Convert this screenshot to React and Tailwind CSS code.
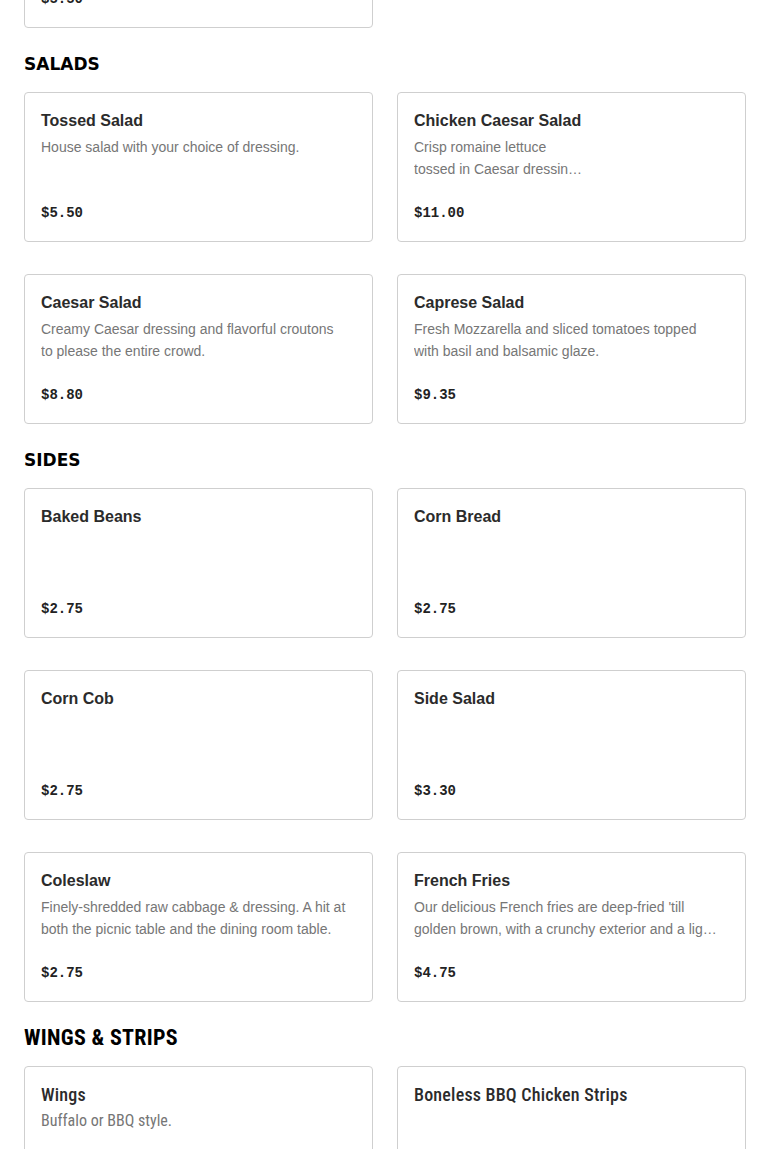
import React from 'react';

const SECTIONS = [
  {
    title: 'SALADS',
    items: [
      { name: 'Tossed Salad', desc: ['House salad with your choice of dressing.'], price: '$5.50' },
      { name: 'Chicken Caesar Salad', desc: ['Crisp romaine lettuce', 'tossed in Caesar dressin…'], price: '$11.00' },
      { name: 'Caesar Salad', desc: ['Creamy Caesar dressing and flavorful croutons', 'to please the entire crowd.'], price: '$8.80' },
      { name: 'Caprese Salad', desc: ['Fresh Mozzarella and sliced tomatoes topped', 'with basil and balsamic glaze.'], price: '$9.35' },
    ],
  },
  {
    title: 'SIDES',
    items: [
      { name: 'Baked Beans', desc: [], price: '$2.75' },
      { name: 'Corn Bread', desc: [], price: '$2.75' },
      { name: 'Corn Cob', desc: [], price: '$2.75' },
      { name: 'Side Salad', desc: [], price: '$3.30' },
      { name: 'Coleslaw', desc: ['Finely-shredded raw cabbage & dressing. A hit at', 'both the picnic table and the dining room table.'], price: '$2.75' },
      { name: 'French Fries', desc: ["Our delicious French fries are deep-fried 'till", 'golden brown, with a crunchy exterior and a lig…'], price: '$4.75' },
    ],
  },
  {
    title: 'WINGS & STRIPS',
    narrow: true,
    items: [
      { name: 'Wings', desc: ['Buffalo or BBQ style.'], price: '' },
      { name: 'Boneless BBQ Chicken Strips', desc: [], price: '' },
    ],
  },
];

function Card({ item, narrow }) {
  return (
    <div className="h-[150px] flex flex-col border border-[#cfcfcf] rounded-[4px] bg-white p-4">
      {narrow ? (
        <p className="font-['Roboto_Condensed','DejaVu_Sans_Condensed',sans-serif] text-[18px] leading-6 font-medium tracking-[0.2px] text-[#2b2b2b]">{item.name}</p>
      ) : (
        <p className="text-[16px] leading-6 font-bold text-[#2b2b2b]">{item.name}</p>
      )}
      <div
        className={
          narrow
            ? "mt-[3px] font-['Roboto_Condensed','DejaVu_Sans_Condensed',sans-serif] text-[16px] leading-[22px] text-[#767676]"
            : 'mt-[3px] text-[14px] leading-[22px] text-[#767676]'
        }
      >
        {item.desc.map((line, i) => (
          <p key={i} className="whitespace-nowrap overflow-hidden">{line}</p>
        ))}
      </div>
      <p className="mt-auto font-['Liberation_Mono',monospace] text-[14px] leading-6 font-bold text-[#222]">{item.price}</p>
    </div>
  );
}

export default function App() {
  return (
    <div className="bg-white min-h-screen px-6 overflow-hidden font-['Liberation_Sans',Arial,sans-serif]">
      {/* tail of previous section, scrolled off the top */}
      <div className="grid grid-cols-2 gap-6 -mt-[122px]">
        <Card item={{ name: 'Fried Pickles', desc: [], price: '$5.50' }} />
      </div>

      {SECTIONS.map(sec => (
        <section key={sec.title}>
          {sec.narrow ? (
            <h2 className="mt-[22px] mb-[14px] font-['Roboto_Condensed','DejaVu_Sans_Condensed',sans-serif] text-[22px] leading-7 font-bold tracking-[0.3px] text-black">
              {sec.title}
            </h2>
          ) : (
            <h2 className="mt-[22px] mb-[14px] font-['DejaVu_Sans',sans-serif] text-[17px] leading-7 font-black text-black">
              {sec.title}
            </h2>
          )}
          <div className="grid grid-cols-2 gap-x-6 gap-y-8">
            {sec.items.map(item => <Card key={item.name} item={item} narrow={sec.narrow} />)}
          </div>
        </section>
      ))}
    </div>
  );
}
